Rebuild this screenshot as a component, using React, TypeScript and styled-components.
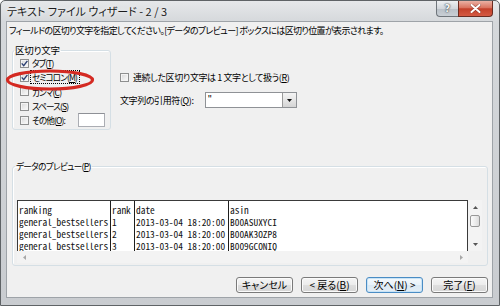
import React from "react";
import styled, { createGlobalStyle } from "styled-components";

const UI_FONT = `"Noto Sans CJK JP", "Noto Sans", sans-serif`;
const MONO_FONT = `"Noto Sans Mono CJK JP", "Liberation Mono", monospace`;

const Global = createGlobalStyle`
  html, body { margin: 0; padding: 0; background: #ffffff; }
  body { width: 500px; height: 306px; overflow: hidden; }
  * { box-sizing: border-box; }
`;

const Window = styled.div`
  position: relative;
  width: 500px;
  height: 306px;
  border: 1px solid #5f6366;
  border-radius: 5px 5px 0 0;
  background: linear-gradient(#e6e8ea 0px, #d5d8db 21px, #c9ccd0 100%);
  padding: 0 6px 7px 5px;
  display: flex;
  flex-direction: column;
  font-family: ${UI_FONT};
  font-feature-settings: "palt";
  color: #000;
`;

const TitleBar = styled.div`
  height: 20px;
  display: flex;
  align-items: flex-start;
  flex: none;
`;

const TitleText = styled.div`
  line-height: 21px;
  font-size: 11px;
  padding-left: 1px;
  color: #1c1c1c;
  white-space: nowrap;
  text-shadow: 0 0 4px #ffffff;
`;

const TitleControls = styled.div`
  margin-left: auto;
  display: flex;
`;

const HelpButton = styled.div`
  width: 22px;
  height: 16px;
  border: 1px solid #6f757b;
  border-top: none;
  border-right: none;
  border-radius: 0 0 0 4px;
  background: linear-gradient(#eef0f2 0%, #d2d7dc 50%, #b9c0c7 51%, #c9cfd5 100%);
  display: flex;
  align-items: center;
  justify-content: center;
  font-family: "DejaVu Sans", sans-serif;
  font-weight: bold;
  font-size: 10px;
  color: #f4f4f4;
  text-shadow: 0 0 2px #3a3f44, 0 0 1px #3a3f44;
`;

const CloseButton = styled.div`
  width: 35px;
  height: 16px;
  border: 1px solid #6a2c22;
  border-top: none;
  border-radius: 0 0 4px 0;
  background: linear-gradient(#eab1a4 0%, #d9735f 45%, #c3402a 52%, #d45a43 100%);
  display: flex;
  align-items: center;
  justify-content: center;
`;

const Client = styled.div`
  flex: 1;
  min-height: 0;
  border: 1px solid #9ea3a8;
  background: #f0f0f0;
  display: flex;
  flex-direction: column;
  font-size: 9px;
  letter-spacing: -0.4px;
`;

const Instruction = styled.div`
  margin: 3px 0 0 2px;
  line-height: 12px;
  font-size: 9px;
  letter-spacing: -0.65px;
  white-space: nowrap;
`;

const TopRow = styled.div`
  display: flex;
  align-items: flex-start;
  margin: 7px 0 0 5px;
`;

const GroupBox = styled.fieldset<{ $width: number }>`
  margin: 0;
  width: ${(p) => p.$width}px;
  min-width: 0;
  border: 1px solid #d5dfe5;
  border-radius: 3px;
  box-shadow: inset 1px 1px 0 #ffffff;
`;

const DelimGroup = styled(GroupBox)`
  padding: 0 5px 2px 7px;
`;

const PreviewGroup = styled(GroupBox)`
  margin: 30px 0 0 5px;
  padding: 0 4px 2px 4px;
`;

const Legend = styled.legend<{ $shift: number; $size: number; $ls: number }>`
  padding: 0 1px;
  margin-left: ${(p) => p.$shift}px;
  line-height: 12px;
  font-size: ${(p) => p.$size}px;
  letter-spacing: ${(p) => p.$ls}px;
  white-space: nowrap;
`;

const CheckRow = styled.div`
  display: flex;
  align-items: center;
  height: 14.3px;
  gap: 1px;
  white-space: nowrap;
  line-height: 12px;
  font-size: 8.6px;
  letter-spacing: -0.9px;
`;

const Box = styled.span`
  width: 9px;
  height: 9px;
  flex: none;
  border: 1px solid #8e8f8f;
  background: linear-gradient(135deg, #d6d6d6 0%, #eeeeee 60%, #fbfbfb 100%);
  box-shadow: inset 0 0 0 1px #f4f4f4;
  display: flex;
  align-items: center;
  justify-content: center;
  margin-right: 1px;
`;

const Label = styled.span<{ $focus?: boolean }>`
  padding: 0 2px 0 1px;
  outline: ${(p) => (p.$focus ? "1px dotted #000" : "none")};
  outline-offset: 0px;
  line-height: 12px;
`;

const SmallInput = styled.div`
  margin-left: auto;
  width: 27px;
  height: 14px;
  background: #ffffff;
  border: 1px solid #abadb3;
  border-top-color: #8e9096;
`;

const Options = styled.div`
  display: flex;
  flex-direction: column;
  margin-left: 9px;
  padding-top: 26px;
  gap: 8px;
`;

const OptionRow = styled.div`
  display: flex;
  align-items: center;
  height: 14px;
  gap: 3px;
  white-space: nowrap;
`;

const QuoteRow = styled.div`
  display: flex;
  align-items: center;
  height: 16px;
  white-space: nowrap;
`;

const QuoteLabel = styled.span`
  width: 85px;
  flex: none;
`;

const Combo = styled.div`
  width: 92px;
  height: 16px;
  background: #ffffff;
  border: 1px solid #8f9296;
  display: flex;
  align-items: stretch;
  font-family: "Liberation Sans", sans-serif;
  font-size: 10px;
`;

const ComboValue = styled.span`
  flex: 1;
  padding-left: 2px;
  line-height: 14px;
`;

const ComboButton = styled.span`
  width: 14px;
  border-left: 1px solid #9a9a9a;
  background: linear-gradient(#f4f4f4 0%, #e6e6e6 50%, #d4d4d4 100%);
  display: flex;
  align-items: center;
  justify-content: center;
`;

const PreviewFrame = styled.div`
  margin-top: 28px;
  display: grid;
  grid-template-columns: 451px 14px;
  grid-template-rows: 51px 12px;
`;

const DataTable = styled.div`
  background: #ffffff;
  border: 1px solid #3a3a3a;
  border-bottom: none;
  display: flex;
  overflow: hidden;
  font-family: ${MONO_FONT};
  font-size: 9.4px;
  letter-spacing: 0;
  font-feature-settings: normal;
`;

const DataColumn = styled.div<{ $width?: number }>`
  width: ${(p) => (p.$width ? `${p.$width}px` : "auto")};
  flex: ${(p) => (p.$width ? "none" : "1")};
  border-right: ${(p) => (p.$width ? "1px solid #1e1e1e" : "none")};
  padding-top: 3px;
`;

const DataCell = styled.div`
  height: 12px;
  line-height: 12px;
  padding-left: 1px;
  white-space: pre;
  color: #111;
`;

const VScroll = styled.div`
  background: #f3f3f3;
  display: flex;
  flex-direction: column;
  align-items: center;
`;

const ArrowCell = styled.div`
  width: 14px;
  height: 14px;
  flex: none;
  display: flex;
  align-items: center;
  justify-content: center;
`;

const Thumb = styled.div`
  width: 10px;
  height: 12px;
  margin-top: 1px;
  border: 1px solid #979797;
  border-radius: 2px;
  background: linear-gradient(90deg, #fbfbfb 0%, #eaeaea 60%, #dcdcdc 100%);
`;

const Spacer = styled.div`
  flex: 1;
`;

const HScroll = styled.div`
  background: #f3f3f3;
  display: flex;
  align-items: center;
`;

const Corner = styled.div`
  background: #f0f0f0;
`;

const ButtonRow = styled.div`
  display: flex;
  justify-content: flex-end;
  gap: 8px;
  margin: 11px 4px 0 0;
`;

const Button = styled.div<{ $focused?: boolean }>`
  width: 57px;
  height: 16px;
  border: 1px solid ${(p) => (p.$focused ? "#4a8cc4" : "#7a7a7a")};
  border-radius: 3px;
  background: ${(p) =>
    p.$focused
      ? "linear-gradient(#f4f9fd 0%, #e9f2f9 48%, #dbe9f4 52%, #e4eef6 100%)"
      : "linear-gradient(#f5f5f5 0%, #ececec 48%, #dedede 52%, #d6d6d6 100%)"};
  box-shadow: inset 0 0 0 1px ${(p) => (p.$focused ? "#c8e3f6" : "#fbfbfb")};
  display: flex;
  align-items: center;
  justify-content: center;
  font-size: 10px;
  letter-spacing: 0;
  line-height: 14px;
  white-space: nowrap;
`;

const Ellipse = styled.svg`
  position: absolute;
  left: 4px;
  top: 67px;
  width: 90px;
  height: 24px;
  overflow: visible;
  pointer-events: none;
`;

const Check = () => (
  <svg width="7" height="7" viewBox="0 0 7 7">
    <path d="M0.7 3.4 L2.7 5.6 L6.4 0.9" fill="none" stroke="#2b3f72" strokeWidth="1.4" />
  </svg>
);

const CheckBox: React.FC<{ checked?: boolean }> = ({ checked }) => <Box>{checked ? <Check /> : null}</Box>;

const Mn: React.FC<{ k: string }> = ({ k }) => (
  <>
    (<u>{k}</u>)
  </>
);

const Tri: React.FC<{ dir: "up" | "down" | "left" | "right"; color: string }> = ({ dir, color }) => {
  const pts: Record<string, string> = {
    up: "0,3 2.5,0 5,3",
    down: "0,0 2.5,3 5,0",
    left: "3,0 0,2.5 3,5",
    right: "0,0 3,2.5 0,5",
  };
  const vertical = dir === "up" || dir === "down";
  return (
    <svg width={vertical ? 5 : 3} height={vertical ? 3 : 5} viewBox={vertical ? "0 0 5 3" : "0 0 3 5"}>
      <polygon points={pts[dir]} fill={color} />
    </svg>
  );
};

const rows = [
  ["ranking", "rank", "date", "asin"],
  ["general_bestsellers", "1", "2013-03-04 18:20:00", "B00ASUXYCI"],
  ["general_bestsellers", "2", "2013-03-04 18:20:00", "B00AK3OZP8"],
  ["general_bestsellers", "3", "2013-03-04 18:20:00", "B009GCONIQ"],
];

const colWidths: (number | undefined)[] = [93, 24, 94, undefined];

export default function App() {
  return (
    <>
      <Global />
      <Window>
        <TitleBar>
          <TitleText>テキスト ファイル ウィザード - 2 / 3</TitleText>
          <TitleControls>
            <HelpButton>?</HelpButton>
            <CloseButton>
              <svg width="11" height="9" viewBox="0 0 11 9">
                <path d="M1.5 1 L9.5 8 M9.5 1 L1.5 8" stroke="#5a1e14" strokeWidth="3.2" strokeLinecap="round" opacity="0.45" />
                <path d="M1.5 1 L9.5 8 M9.5 1 L1.5 8" stroke="#ffffff" strokeWidth="2" strokeLinecap="round" />
              </svg>
            </CloseButton>
          </TitleControls>
        </TitleBar>
        <Client>
          <Instruction>
            フィールドの区切り文字を指定してください。[データのプレビュー] ボックスには区切り位置が表示されます。
          </Instruction>
          <TopRow>
            <DelimGroup $width={99}>
              <Legend $shift={-6} $size={9.5} $ls={-0.2}>
                区切り文字
              </Legend>
              <CheckRow>
                <CheckBox checked />
                <Label>
                  タブ<Mn k="T" />
                </Label>
              </CheckRow>
              <CheckRow>
                <CheckBox checked />
                <Label $focus>
                  セミコロン<Mn k="M" />
                </Label>
              </CheckRow>
              <CheckRow>
                <CheckBox />
                <Label>
                  カンマ<Mn k="C" />
                </Label>
              </CheckRow>
              <CheckRow>
                <CheckBox />
                <Label>
                  スペース<Mn k="S" />
                </Label>
              </CheckRow>
              <CheckRow>
                <CheckBox />
                <Label>
                  その他<Mn k="O" />:
                </Label>
                <SmallInput />
              </CheckRow>
            </DelimGroup>
            <Options>
              <OptionRow>
                <CheckBox />
                <span>
                  連続した区切り文字は 1 文字として扱う<Mn k="R" />
                </span>
              </OptionRow>
              <QuoteRow>
                <QuoteLabel>
                  文字列の引用符<Mn k="Q" />:
                </QuoteLabel>
                <Combo>
                  <ComboValue>"</ComboValue>
                  <ComboButton>
                    <Tri dir="down" color="#111" />
                  </ComboButton>
                </Combo>
              </QuoteRow>
            </Options>
          </TopRow>
          <PreviewGroup $width={476}>
            <Legend $shift={-2} $size={8.6} $ls={-0.65}>
              データのプレビュー<Mn k="P" />
            </Legend>
            <PreviewFrame>
              <DataTable>
                {colWidths.map((w, ci) => (
                  <DataColumn key={ci} $width={w}>
                    {rows.map((r, ri) => (
                      <DataCell key={ri}>{r[ci]}</DataCell>
                    ))}
                  </DataColumn>
                ))}
              </DataTable>
              <VScroll>
                <ArrowCell>
                  <Tri dir="up" color="#555" />
                </ArrowCell>
                <Thumb />
                <Spacer />
                <ArrowCell>
                  <Tri dir="down" color="#555" />
                </ArrowCell>
              </VScroll>
              <HScroll>
                <ArrowCell>
                  <Tri dir="left" color="#a8a8a8" />
                </ArrowCell>
                <Spacer />
                <ArrowCell>
                  <Tri dir="right" color="#a8a8a8" />
                </ArrowCell>
              </HScroll>
              <Corner />
            </PreviewFrame>
          </PreviewGroup>
          <ButtonRow>
            <Button>キャンセル</Button>
            <Button>
              &lt; 戻る<Mn k="B" />
            </Button>
            <Button $focused>
              次へ<Mn k="N" /> &gt;
            </Button>
            <Button>
              完了<Mn k="F" />
            </Button>
          </ButtonRow>
        </Client>
        <Ellipse viewBox="0 0 90 24">
          <ellipse cx="45" cy="12" rx="42.5" ry="9" fill="none" stroke="#d42a22" strokeWidth="3.2" />
        </Ellipse>
      </Window>
    </>
  );
}
